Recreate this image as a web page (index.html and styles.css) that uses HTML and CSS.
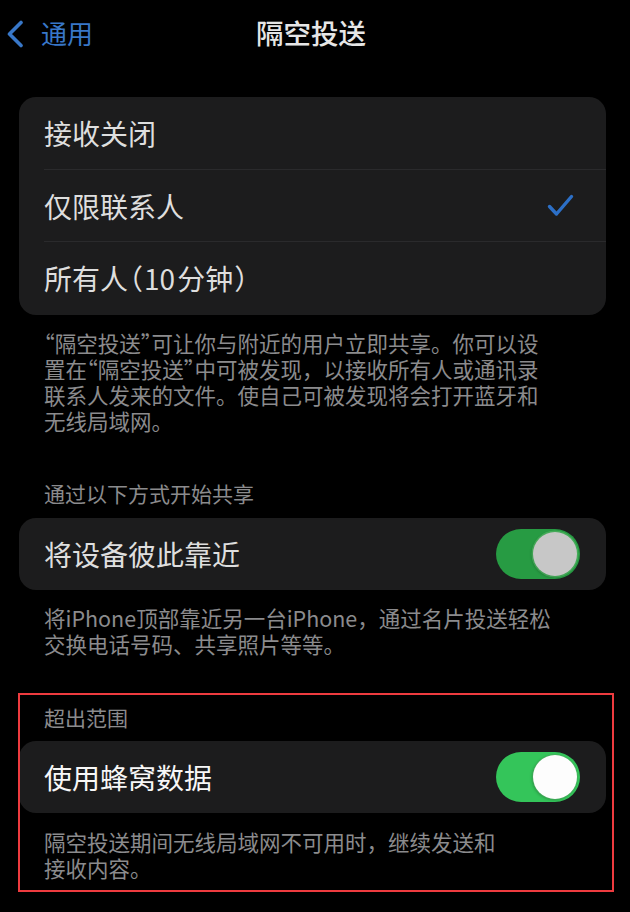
FILE: index.html
```html
<!DOCTYPE html>
<html lang="zh-CN">
<head>
<meta charset="utf-8">
<title>隔空投送</title>
<link rel="stylesheet" href="styles.css">
</head>
<body>
<div class="screen">
  <header class="nav">
    <a class="back" href="#">
      <svg class="chevron" width="18" height="28" viewBox="0 0 18 28" aria-hidden="true">
        <path d="M15 2.5 L3.5 14 L15 25.5" fill="none" stroke="currentColor" stroke-width="3.6" stroke-linecap="round" stroke-linejoin="round"/>
      </svg>
      <span>通用</span>
    </a>
    <h1 class="title">隔空投送</h1>
    <span></span>
  </header>

  <section class="group group-receive">
    <div class="card">
      <div class="row"><span class="label">接收关闭</span></div>
      <div class="row"><span class="label">仅限联系人</span>
        <svg class="check" width="27" height="23" viewBox="0 0 27 23" aria-hidden="true">
          <path d="M2.5 12.5 L9.5 20 L24.5 2.5" fill="none" stroke="currentColor" stroke-width="3.4" stroke-linecap="round" stroke-linejoin="round"/>
        </svg>
      </div>
      <div class="row"><span class="label">所有人<span class="paren">（</span>10<span class="unit">分钟</span><span class="paren">）</span></span></div>
    </div>
    <p class="footer"><span class="q">“</span>隔空投送<span class="q">”</span>可让你与附近的用户立即共享。你可以设<br>置在<span class="q">“</span>隔空投送<span class="q">”</span>中可被发现，以接收所有人或通讯录<br>联系人发来的文件。使自己可被发现将会打开蓝牙和<br>无线局域网。</p>
  </section>

  <section class="group group-share">
    <h2 class="header">通过以下方式开始共享</h2>
    <div class="card">
      <div class="row"><span class="label">将设备彼此靠近</span>
        <span class="toggle toggle-dim"><span class="knob"></span></span>
      </div>
    </div>
    <p class="footer">将iPhone顶部靠近另一台iPhone，通过名片投送轻松<br>交换电话号码、共享照片等等。</p>
  </section>

  <section class="group group-range">
    <h2 class="header">超出范围</h2>
    <div class="card">
      <div class="row"><span class="label label-bright">使用蜂窝数据</span>
        <span class="toggle"><span class="knob"></span></span>
      </div>
    </div>
    <p class="footer">隔空投送期间无线局域网不可用时，继续发送和<br>接收内容。</p>
  </section>
</div>
</body>
</html>
```

FILE: styles.css
```css
* {
  box-sizing: border-box;
}

html, body {
  margin: 0;
  padding: 0;
  background: #000;
}

body {
  font-family: "Noto Sans CJK SC", "Noto Sans", sans-serif;
  color: #e2e2e2;
  width: 630px;
  height: 912px;
  overflow: hidden;
}

.screen {
  display: flex;
  flex-direction: column;
}

/* navigation bar */
.nav {
  height: 64px;
  display: grid;
  grid-template-columns: 1fr auto 1fr;
  align-items: center;
}

.back {
  display: flex;
  align-items: center;
  color: #3877c8;
  text-decoration: none;
  font-size: 26px;
  line-height: 30px;
  padding-left: 6px;
  margin-top: 2px;
}

.chevron {
  display: block;
  margin-top: 2px;
}

.back span {
  margin-left: 17px;
}

.title {
  margin: 0 8px 0 0;
  font-size: 27.5px;
  font-weight: 500;
  line-height: 34px;
  color: #e6e6e6;
}

/* grouped list sections */
.group {
  display: flex;
  flex-direction: column;
}

.group-receive {
  margin-top: 33px;
}

.group-share {
  margin-top: 46px;
}

.group-range {
  margin-top: 47px;
  position: relative;
}

/* red highlight frame drawn around the last section */
.group-range::after {
  content: "";
  position: absolute;
  left: 18px;
  right: 16px;
  top: -11px;
  bottom: -11px;
  border: 2.5px solid #ee3b3f;
  pointer-events: none;
}

.header {
  margin: 0 0 12px 44px;
  font-size: 21px;
  font-weight: 400;
  line-height: 26px;
  color: #8b8b8d;
}

.group-range .header {
  margin-bottom: 11px;
}

.card {
  margin-left: 19px;
  width: 587px;
  background: #1c1c1d;
  border-radius: 17px;
  overflow: hidden;
}

.group-receive .card {
  padding-bottom: 2px;
}

.row {
  height: 72px;
  display: flex;
  align-items: center;
  justify-content: space-between;
  padding: 0 26px 0 25px;
}

.row + .row {
  border-top: 1px solid #2a2a2c;
  margin-left: 25px;
  padding-left: 0;
}

.label {
  font-size: 28px;
  line-height: 34px;
  color: #dedede;
}

.paren {
  font-feature-settings: "halt" 1;
  margin: 0 1px;
}

.unit {
  margin-left: 2px;
}

.label-bright {
  color: #f7f7f7;
}

.check {
  display: block;
  color: #2c6fc6;
  margin-right: 6px;
}

/* switches */
.toggle {
  width: 84px;
  height: 50px;
  border-radius: 25px;
  background: #34c55a;
  display: flex;
  align-items: center;
  justify-content: flex-end;
  padding: 3px;
}

.knob {
  width: 44px;
  height: 44px;
  border-radius: 50%;
  background: #fdfdfd;
  box-shadow: 0 0 0 1px rgba(80, 170, 95, 0.5), -1px 1px 3px rgba(0, 0, 0, 0.25);
}

.toggle-dim {
  background: #279b43;
}

.toggle-dim .knob {
  background: #c7c7c7;
  box-shadow: 0 0 0 1.5px rgba(90, 185, 105, 0.6), -1px 1px 3px rgba(0, 0, 0, 0.3);
}

.footer {
  margin: 15px 0 0 44px;
  font-size: 21.5px;
  line-height: 26px;
  color: #8b8b8d;
}

.group-range .footer {
  margin-top: 16px;
}

.q {
  font-feature-settings: "halt" 1;
}
```
